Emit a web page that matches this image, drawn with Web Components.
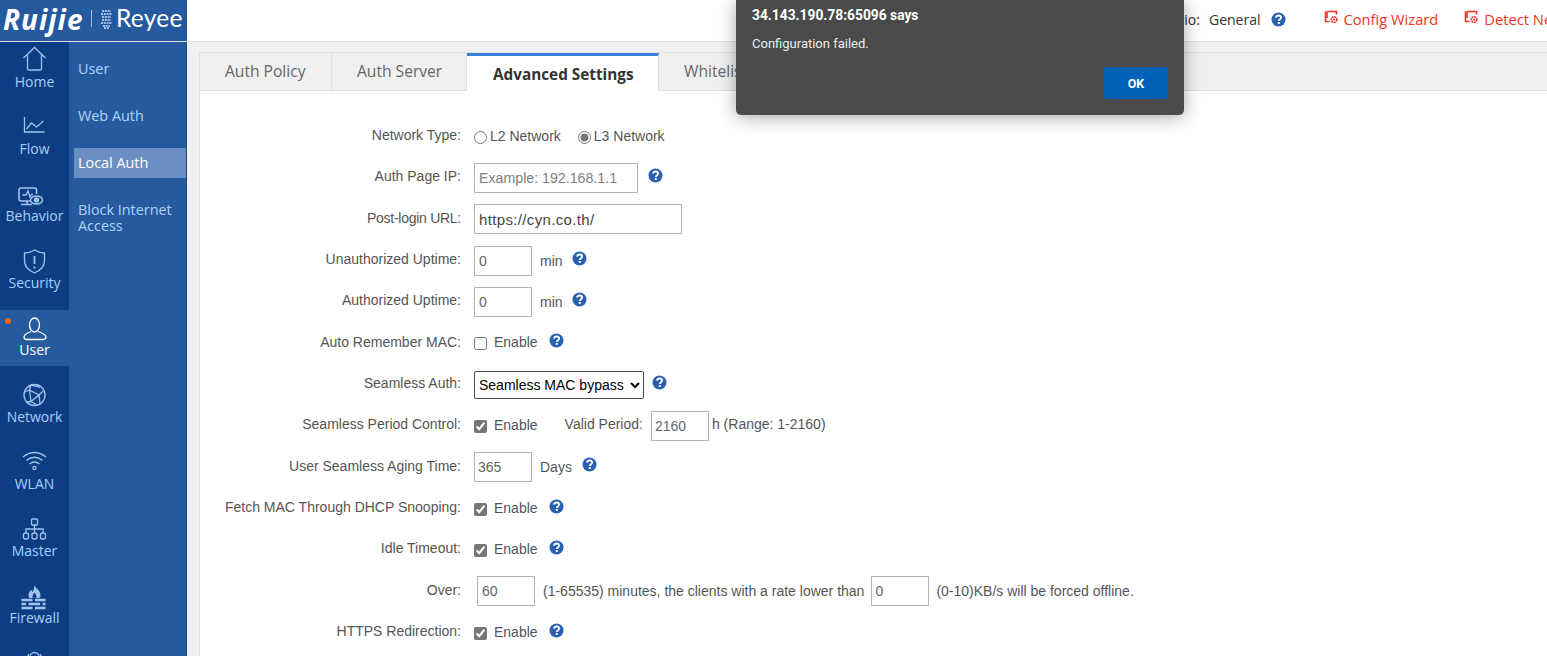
<!DOCTYPE html>
<html lang="en"><head><meta charset="utf-8"><title>Advanced Settings</title>
<style>
html,body{margin:0;padding:0;height:656px;overflow:hidden;background:#f1f1f1;font-family:"Liberation Sans",Arial,sans-serif}
body{display:flex;flex-direction:column}
</style></head><body>
<ru-header></ru-header>
<ru-main>
  <ru-sidebar slot="side"></ru-sidebar>
  <ru-panel slot="panel">
    <ru-tabs active="2" items="Auth Policy|Auth Server|Advanced Settings|Whitelist"></ru-tabs>
    <ru-form>
      <ru-row label="Network Type:"><ru-opt type="radio" text="L2 Network"></ru-opt><ru-opt type="radio" checked text="L3 Network" style="margin-left:17px"></ru-opt></ru-row>
      <ru-row label="Auth Page IP:"><ru-input w="164" size="14.2" placeholder="Example: 192.168.1.1"></ru-input><ru-help style="margin-left:10px"></ru-help></ru-row>
      <ru-row label="Post-login URL:" ls="-.27"><ru-input w="208" size="15" ls=".35" value="https://cyn.co.th/" color="#444"></ru-input></ru-row>
      <ru-row label="Unauthorized Uptime:"><ru-input w="58" value="0"></ru-input><ru-text style="margin-left:8px">min</ru-text><ru-help style="margin-left:9px"></ru-help></ru-row>
      <ru-row label="Authorized Uptime:"><ru-input w="58" value="0"></ru-input><ru-text style="margin-left:8px">min</ru-text><ru-help style="margin-left:9px"></ru-help></ru-row>
      <ru-row label="Auto Remember MAC:"><ru-opt type="checkbox" text="Enable"></ru-opt><ru-help style="margin-left:11px"></ru-help></ru-row>
      <ru-row label="Seamless Auth:"><ru-select text="Seamless MAC bypass"></ru-select><ru-help style="margin-left:8px"></ru-help></ru-row>
      <ru-row label="Seamless Period Control:"><ru-opt type="checkbox" checked text="Enable"></ru-opt><ru-text style="margin-left:27px" raised>Valid Period:</ru-text><ru-input w="58" value="2160" pad="3" style="margin-left:8px"></ru-input><ru-text style="margin-left:3px" raised>h (Range: 1-2160)</ru-text></ru-row>
      <ru-row label="User Seamless Aging Time:"><ru-input w="58" value="365" pad="3"></ru-input><ru-text style="margin-left:8px">Days</ru-text><ru-help style="margin-left:10px"></ru-help></ru-row>
      <ru-row label="Fetch MAC Through DHCP Snooping:"><ru-opt type="checkbox" checked text="Enable"></ru-opt><ru-help style="margin-left:11px"></ru-help></ru-row>
      <ru-row label="Idle Timeout:"><ru-opt type="checkbox" checked text="Enable"></ru-opt><ru-help style="margin-left:11px"></ru-help></ru-row>
      <ru-row label="Over:"><ru-input w="58" value="60" style="margin-left:3px"></ru-input><ru-text style="margin-left:8px">(1-65535) minutes, the clients with a rate lower than</ru-text><ru-input w="58" value="0" pad="3" style="margin-left:7px"></ru-input><ru-text style="margin-left:7px">(0-10)KB/s will be forced offline.</ru-text></ru-row>
      <ru-row label="HTTPS Redirection:"><ru-opt type="checkbox" checked text="Enable"></ru-opt><ru-help style="margin-left:11px"></ru-help></ru-row>
    </ru-form>
  </ru-panel>
</ru-main>
<ru-alert title-text="34.143.190.78:65096 says" message="Configuration failed."></ru-alert>
<script>
const HELP='<svg width="15" height="15" viewBox="0 0 15 15" aria-hidden="true"><circle cx="7.5" cy="7.5" r="7" fill="#2b60b0"/><path d="M5 5.7C5.2 4.3 6.2 3.5 7.6 3.5 9.1 3.5 10.1 4.4 10.1 5.6 10.1 7.4 7.8 7.4 7.8 9" fill="none" stroke="#fff" stroke-width="1.8"/><rect x="6.8" y="10" width="2" height="1.9" fill="#fff"/></svg>';
const ICONS={
home:'<path d="M8.5 12L19.5 1.5 30.5 12M12.5 9V22.5Q12.5 24 14 24H25Q26.5 24 26.5 22.5V9"/>',
flow:'<path d="M9.5 4V19H29.5M11.5 16L16.5 10 21.5 14 28.5 8"/>',
behavior:'<path stroke-width="1.6" d="M15 21H6Q4 21 4 19V10Q4 8 6 8H20Q21.5 8 21.5 10V14M12 21V24M6 24.5H17"/><path d="M7.5 15H11L13 11 15 17 16.5 14.5H18"/><ellipse cx="21.5" cy="20" rx="6" ry="4" stroke-width="1.5"/><circle cx="21.5" cy="20" r="2" fill="currentColor"/>',
security:'<path d="M19.5 3Q24 6 29.5 6V14C29.5 20 24 24 19.5 26 15 24 9.5 20 9.5 14V6Q15 6 19.5 3Z"/><path d="M19.5 9V17M19.5 19.5V21.5" stroke-width="1.8"/>',
user:'<ellipse cx="19.5" cy="11" rx="5" ry="7"/><path d="M16 17.5C12 19 9 21 9 23 9 25 11 25.5 12 25.5H27C29 25.5 31 25 31 23 31 21 27 19 23 17.5"/>',
network:'<circle cx="19.5" cy="14" r="10.5"/><path d="M14.5 9L24 14 16 20.5ZM14.5 9L16 4M14.5 9L9.5 11M24 14L28 10M24 14L25 22.5M16 20.5L11 21M16 20.5L22 24M16 4.2L25 6"/>',
wlan:'<path d="M8 9Q19.5 0 31 9M11.5 12.5Q19.5 6 27.5 12.5M14.5 16Q19.5 12 24.5 16"/><circle cx="19.5" cy="20" r="1.6"/>',
master:'<rect x="16.5" y="4" width="6" height="6" rx="1"/><path d="M19.5 10V18M11 18V14H28V18"/><rect x="8.5" y="18" width="5" height="6" rx="2"/><rect x="17" y="18" width="5" height="6" rx="2"/><rect x="25.5" y="18" width="5" height="6" rx="2"/>',
firewall:'<path stroke="none" fill="currentColor" d="M19.5 3C20 6 25.5 8 25.5 13 25.5 14.5 25 15.5 24.5 16H14.5C14 15.5 13.5 14.5 13.5 13 13.5 10.5 15 10 15.5 8 16.5 8.5 17 9 17.5 10 18.5 8 19.5 6 19.5 3ZM19.5 10.5C18.5 12 17.5 13 17.5 14.5 17.5 15 17.6 15.5 18 16H21C21.4 15.5 21.5 15 21.5 14.5 21.5 13 20.3 12 19.5 10.5Z" fill-rule="evenodd"/><path stroke-width="2.3" d="M6.5 18H17.5M20 18H30.5M6.5 22H11M13.5 22H25M27.5 22H30.5M6.5 26H17.5M20 26H30.5"/>',
more:'<circle cx="19.5" cy="8" r="4.5"/><path d="M11 10L14 5M28 10L25 5"/>'
};
const base=(el,html)=>{el.attachShadow({mode:'open'}).innerHTML=html};
class RuHeader extends HTMLElement{connectedCallback(){base(this,`<style>
:host{display:flex;height:41px;flex:none;background:#fff;border-bottom:1px solid #dfdfdf;overflow:hidden}
.logo{width:187px;flex:none;background:#265a9f;color:#fff;display:flex;align-items:center;box-sizing:border-box;padding-left:3px}
.r{font:italic 700 28px/1 "Open Sans",sans-serif;letter-spacing:1px;width:81px;margin-bottom:3px;white-space:nowrap}
.bar{width:1px;height:17px;background:#9db9dd;margin:0 0 4px 7px}
.emb{margin:0 4px 4px 9px}
.y{font:400 24.5px/1 Lato,sans-serif;letter-spacing:.3px;margin-bottom:4px}
.top{flex:1;display:flex;align-items:center;padding:0 0 3px 953px;white-space:nowrap;font:14px "Open Sans",sans-serif;color:#333;overflow:hidden;min-width:0}
.top .g{margin-left:9px}.top svg{flex:none}
.q{margin-left:10px;display:flex}
.w{display:flex;align-items:center;color:#f33325;font-size:14.7px;flex:none}
.w svg{margin-right:5px;margin-bottom:3px}
</style>
<div class="logo"><span class="r">Ruijie</span><span class="bar"></span>
<svg class="emb" width="11" height="20" viewBox="0 0 11 20" aria-hidden="true"><path d="M1 2H10M0 5H11M1 8H10M1 11H10M0 14H11M2 17H9M3 19H8" stroke="#cfe0f5" stroke-width="1.7" stroke-dasharray="2 .8" fill="none"/></svg>
<span class="y">Reyee</span></div>
<div class="top"><span>Scenario:</span><span class="g">General</span><span class="q">${HELP}</span>
<span class="w" style="margin-left:38px">${this.wiz()}Config Wizard</span>
<span class="w" style="margin-left:26px">${this.wiz()}Detect Network</span></div>`)}
wiz(){return '<svg width="15" height="15" viewBox="0 0 15 15" aria-hidden="true"><path d="M3 1H12V4M1 1V11H5" transform="translate(.5 .5)" fill="none" stroke="#f33325" stroke-width="1.6"/><path d="M3 1V8" fill="none" stroke="#f33325" stroke-width="1.6"/><circle cx="10" cy="9.5" r="2.8" fill="none" stroke="#f33325" stroke-width="1.6" stroke-dasharray="2 .6"/><circle cx="10" cy="9.5" r="1" fill="#f33325"/></svg>'}}
class RuMain extends HTMLElement{connectedCallback(){base(this,`<style>:host{display:flex;flex:1;min-height:0;overflow:hidden}</style><slot name="side"></slot><slot name="panel"></slot>`)}}
class RuSidebar extends HTMLElement{connectedCallback(){
const nav=[['home','Home'],['flow','Flow'],['behavior','Behavior'],['security','Security'],['user','User',1],['network','Network'],['wlan','WLAN'],['master','Master'],['firewall','Firewall'],['more','']];
base(this,`<style>
:host{display:flex;width:187px;flex:none;height:100%;background:#265a9f;box-sizing:border-box;border-right:1px solid #1b4a8b;overflow:hidden;font-family:"Open Sans",sans-serif}
.a{width:69px;flex:none;background:#0d3e84;display:flex;flex-direction:column}
.i{height:56px;flex:none;margin-bottom:11px;display:flex;flex-direction:column;align-items:center;color:#a2c2ec;padding-top:4px;box-sizing:border-box;position:relative}
.i svg{display:block;flex:none;fill:none;stroke:currentColor;stroke-width:1.3;overflow:visible}
.i span{font-size:14px;line-height:20px;color:#a8cffb;margin-top:-2px;white-space:nowrap}
.i.on{background:#265a9f;color:#fff}.i.on span{color:#fff}
.i.on::before{content:"";position:absolute;left:5px;top:8px;width:6px;height:6px;border-radius:50%;background:#f60}
.b{flex:1;display:flex;flex-direction:column;padding:12px 0 0 5px}
.s{font-size:14.4px;line-height:16px;color:#afd2f9;padding:7px 4px;margin-bottom:17px}
.s.on{background:#6a8ec2;color:#fff}
</style><div class="a">${nav.map(n=>`<div class="i${n[2]?' on':''}"><svg width="40" height="28" viewBox="0 0 40 28" aria-hidden="true">${ICONS[n[0]]}</svg>${n[1]?`<span>${n[1]}</span>`:''}</div>`).join('')}</div>
<div class="b"><div class="s">User</div><div class="s">Web Auth</div><div class="s on">Local Auth</div><div class="s">Block Internet Access</div></div>`)}}
class RuPanel extends HTMLElement{connectedCallback(){base(this,`<style>:host{display:block;flex:1;min-width:0;margin:10px 0 0 12px;background:#fff;border-left:1px solid #dfdfdf;overflow:hidden}</style><slot></slot>`)}}
class RuTabs extends HTMLElement{connectedCallback(){
const items=this.getAttribute('items').split('|'),act=+this.getAttribute('active');
const w=[132,135,192,200],pad=[25,25,26,25];
base(this,`<style>
:host{display:flex;height:37px;box-sizing:content-box;background:#f0f0f0;border-top:1px solid #dfdfdf;border-bottom:1px solid #dfdfdf;font:15.6px "Open Sans",sans-serif;color:#666}
.t{box-sizing:border-box;height:37px;border-right:1px solid #dfdfdf;display:flex;align-items:center;padding-bottom:2px;white-space:nowrap;flex:none}
.t.on{background:#fff;color:#333;font-weight:700;border-top:3px solid #3a7fdb;height:38px;margin-bottom:-1px;padding-top:1px;padding-bottom:0;font-size:15.3px}
</style>${items.map((x,i)=>`<div class="t${i==act?' on':''}" style="width:${w[i]}px;padding-left:${pad[i]}px">${x}</div>`).join('')}`)}}
class RuForm extends HTMLElement{connectedCallback(){base(this,`<style>:host{display:block;padding-top:25px}</style><slot></slot>`)}}
class RuRow extends HTMLElement{connectedCallback(){base(this,`<style>
:host{display:grid;grid-template-columns:261px 1fr;column-gap:13px;height:41.33px;align-items:center;font:14px "Liberation Sans",Arial,sans-serif;color:#555}
.l{text-align:right;padding-bottom:3.4px;white-space:nowrap;letter-spacing:${this.getAttribute('ls')||0}px}
.c{display:flex;align-items:center;white-space:nowrap}
</style><div class="l">${this.getAttribute('label')}</div><div class="c"><slot></slot></div>`)}}
class RuInput extends HTMLElement{connectedCallback(){
const v=this.getAttribute('value'),p=this.getAttribute('placeholder');
base(this,`<style>
:host{display:block;flex:none}
input{display:block;box-sizing:border-box;width:${this.getAttribute('w')}px;height:30px;border:1px solid #b4b4b4;border-radius:0;padding:0 ${this.getAttribute('pad')||4}px;margin:0;background:#fff;font:${this.getAttribute('size')||14}px "Liberation Sans",Arial,sans-serif;letter-spacing:${this.getAttribute('ls')||0}px;color:${this.getAttribute('color')||'#666'};outline:0}
input::placeholder{color:#808080;opacity:1}
</style><input type="text"${v!==null?` value="${v}"`:''}${p?` placeholder="${p}"`:''}>`)}}
class RuOpt extends HTMLElement{connectedCallback(){
const t=this.getAttribute('type'),r=t=='radio',c=this.hasAttribute('checked');
base(this,`<style>
:host{display:flex;align-items:center;flex:none}
input{margin:${r||c?2:0}px ${r?3:7}px 0 0;width:13px;height:13px;accent-color:#767676;flex:none}
span{padding-bottom:2px}
</style><input type="${t}"${c?' checked':''}><span>${this.getAttribute('text')}</span>`)}}
class RuText extends HTMLElement{connectedCallback(){base(this,`<style>:host{display:block;flex:none;${this.hasAttribute('raised')?'padding-bottom:3px':''}}</style><slot></slot>`)}}
class RuHelp extends HTMLElement{connectedCallback(){base(this,`<style>:host{display:block;flex:none;height:15px;margin-bottom:5px}svg{display:block}</style>${HELP}`)}}
class RuSelect extends HTMLElement{connectedCallback(){base(this,`<style>
:host{display:block;flex:none}
select{display:block;box-sizing:border-box;width:170px;height:28px;border:1px solid #4a4a4a;border-radius:2px;background:#fff;color:#000;font:14px "Liberation Sans",Arial,sans-serif;padding:0;margin:0;outline:0}
</style><select><option>${this.getAttribute('text')}</option></select>`)}}
class RuAlert extends HTMLElement{connectedCallback(){base(this,`<style>
:host{position:absolute;left:736px;top:0;width:448px;height:115px;box-sizing:border-box;background:#4a4a4a;border-radius:0 0 5px 5px;box-shadow:0 2px 18px rgba(0,0,0,.35);color:#fff;font-family:Roboto,sans-serif;padding:7px 16px 16px;display:flex;flex-direction:column}
.h{font-size:13.8px;font-weight:700;line-height:17px}
.m{font-size:13px;line-height:17px;margin-top:11px;color:#ececec}
.f{margin-top:auto;display:flex;justify-content:flex-end}
button{width:64px;height:32px;border:0;border-radius:2px;background:#0262b7;color:#fff;font:700 12.5px Roboto,sans-serif;padding:0}
</style><div class="h">${this.getAttribute('title-text')}</div><div class="m">${this.getAttribute('message')}</div><div class="f"><button>OK</button></div>`)}}
const defs={'ru-header':RuHeader,'ru-main':RuMain,'ru-sidebar':RuSidebar,'ru-panel':RuPanel,'ru-tabs':RuTabs,'ru-form':RuForm,'ru-row':RuRow,'ru-input':RuInput,'ru-opt':RuOpt,'ru-text':RuText,'ru-help':RuHelp,'ru-select':RuSelect,'ru-alert':RuAlert};
for(const k in defs)customElements.define(k,defs[k]);
</script>
</body></html>
